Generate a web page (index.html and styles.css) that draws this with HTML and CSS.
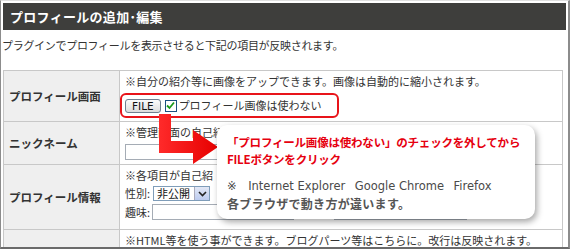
FILE: index.html
```html
<!DOCTYPE html>
<html lang="ja">
<head>
<meta charset="utf-8">
<link rel="stylesheet" href="styles.css">
</head>
<body>
<div class="frame">
  <h1 class="title">プロフィールの追加･編集</h1>
  <p class="intro">プラグインでプロフィールを表示させると下記の項目が反映されます。</p>
  <table class="form">
    <tr class="r1">
      <th>プロフィール画面</th>
      <td>
        <div class="note">※自分の紹介等に画像をアップできます。画像は自動的に縮小されます。</div>
        <div class="line">
          <span class="mark"><span class="btn">FILE</span><span class="cb"><svg width="9" height="9" viewBox="0 0 9 9"><path d="M1 4.5 L3.5 7 L8 1.5" fill="none" stroke="#1a9a1a" stroke-width="1.8"/></svg></span>プロフィール画像は使わない</span>
        </div>
      </td>
    </tr>
    <tr class="r2">
      <th>ニックネーム</th>
      <td>
        <div class="note">※管理画面の自己紹</div>
        <div class="line"><span class="input w-nick"></span></div>
      </td>
    </tr>
    <tr class="r3">
      <th>プロフィール情報</th>
      <td>
        <div class="note">※各項目が自己紹</div>
        <div class="line">性別: <span class="select"><span class="val">非公開</span><span class="drop"><svg width="9" height="6" viewBox="0 0 9 6"><path d="M1 1 L4.5 4.5 L8 1" fill="none" stroke="#222" stroke-width="1.6"/></svg></span></span></div>
        <div class="line">趣味: <span class="input w-hobby"></span><span class="input w-job"></span></div>
      </td>
    </tr>
    <tr class="r4">
      <th></th>
      <td>
        <div class="note">※HTML等を使う事ができます。ブログパーツ等はこちらに。改行は反映されます。</div>
      </td>
    </tr>
  </table>

  <svg class="arrow" width="70" height="60" viewBox="0 0 70 60">
    <defs>
      <linearGradient id="ag" x1="0" y1="0" x2="1" y2="0">
        <stop offset="0" stop-color="#ff2a2a"/>
        <stop offset="1" stop-color="#e60000"/>
      </linearGradient>
    </defs>
    <path d="M2 0 H14 V27 H36 V16 L61 33 L36 50 V39 H2 Z" fill="url(#ag)"/>
  </svg>

  <div class="callout">
    <p class="red">「プロフィール画像は使わない」のチェックを外してから<br>FILEボタンをクリック</p>
    <p class="gray"><span class="latin">※&emsp;Internet Explorer&ensp; Google Chrome&ensp; Firefox</span><br>各ブラウザで動き方が違います。</p>
  </div>
</div>
</body>
</html>
```

FILE: styles.css
```css
* { box-sizing: border-box; }
html, body { margin: 0; padding: 0; background: #fff; }
body {
  font-family: "Noto Sans CJK JP", "Noto Sans", sans-serif;
  font-size: 11px;
  color: #333;
}
.frame {
  position: relative;
  width: 570px;
  height: 249px;
  overflow: hidden;
  border-left: 1px solid #8c8c8c;
  border-right: 2px solid #8c8c8c;
  border-top: 1px solid #e0e0e0;
  border-bottom: 2px solid #6a6a6a;
  padding: 2px 0 0 2px;
}
.title {
  margin: 0 2px 0 0;
  height: 27px;
  background: #3e3e3c;
  color: #fff;
  font-size: 13px;
  font-weight: bold;
  line-height: 27px;
  padding-left: 7px;
  letter-spacing: 0.3px;
}
.intro {
  margin: 8px 0 0 -1px;
  height: 32px;
  line-height: 15px;
  font-size: 11px;
  letter-spacing: -0.3px;
}
.form {
  border-collapse: collapse;
  width: 560px;
  margin-left: 0;
}
.form th, .form td {
  border: 1px solid #c8c8c8;
  vertical-align: top;
}
.form th {
  width: 116px;
  background: #efefef;
  text-align: left;
  vertical-align: middle;
  font-weight: bold;
  font-size: 11.5px;
  color: #333;
  padding: 0 0 0 5px;
}
.form td {
  padding: 3px 0 0 5px;
  line-height: 15px;
}
.r1 { height: 51px; }
.r2 { height: 43px; }
.r3 { height: 65px; }
.r4 { height: 30px; }
.r4 td { padding-top: 3px; }
.line {
  display: flex;
  align-items: center;
  white-space: nowrap;
}
.r1 .line { margin-top: 4px; }
.r2 .line { margin-top: 4px; }
.r3 .line { margin-top: 3px; }
.mark {
  display: inline-flex;
  align-items: center;
  border: 2px solid #e8141a;
  border-radius: 6px;
  padding: 3px 16px 3px 3px;
  margin-left: -5px;
  height: 25px;
}
.btn {
  display: inline-block;
  height: 14px;
  line-height: 12px;
  padding: 0 6px;
  border: 1px solid #6f7f90;
  border-radius: 3px;
  background: linear-gradient(#fbfbfb, #dcdcdc);
  font-family: "DejaVu Sans", sans-serif;
  font-size: 10.5px;
  color: #111;
  margin-right: 4px;
}
.cb {
  display: inline-flex;
  align-items: center;
  justify-content: center;
  width: 12px;
  height: 12px;
  border: 1px solid #1c5180;
  background: #fff;
  margin-right: 2px;
}
.input {
  display: inline-block;
  height: 16px;
  border: 1px solid #a5acb5;
  background: #fff;
}
.w-nick { width: 200px; }
.w-hobby { width: 142px; margin-left: 2px; }
.w-job { width: 133px; margin-left: 40px; }
.select {
  display: inline-flex;
  align-items: stretch;
  height: 15px;
  border: 1px solid #7f9db9;
  margin-left: 3px;
  background: #fff;
}
.select .val { padding: 0 4px 0 3px; line-height: 13px; color: #111; }
.select .drop {
  width: 15px;
  display: inline-flex;
  align-items: center;
  justify-content: center;
  background: linear-gradient(#e3e8f6, #bccbef);
  border-left: 1px solid #aab;
}
.arrow {
  position: absolute;
  left: 156px;
  top: 113px;
}
.callout {
  position: absolute;
  left: 216px;
  top: 124px;
  width: 318px;
  height: 94px;
  background: #fff;
  border-radius: 10px;
  box-shadow: 2px 3px 6px rgba(0,0,0,0.35);
  padding: 9px 0 0 10px;
}
.callout p { margin: 0; }
.red {
  color: #e6000f;
  font-weight: bold;
  font-size: 11.5px;
  line-height: 17px;
  letter-spacing: -0.2px;
}
.gray {
  margin-top: 8px !important;
  color: #555;
  font-size: 12px;
  line-height: 17px;
  font-weight: bold;
  letter-spacing: 0.3px;
}
.latin {
  font-family: "DejaVu Sans", sans-serif;
  font-weight: normal;
  font-size: 11.5px;
  color: #4a4a4a;
  letter-spacing: 0;
}
```
